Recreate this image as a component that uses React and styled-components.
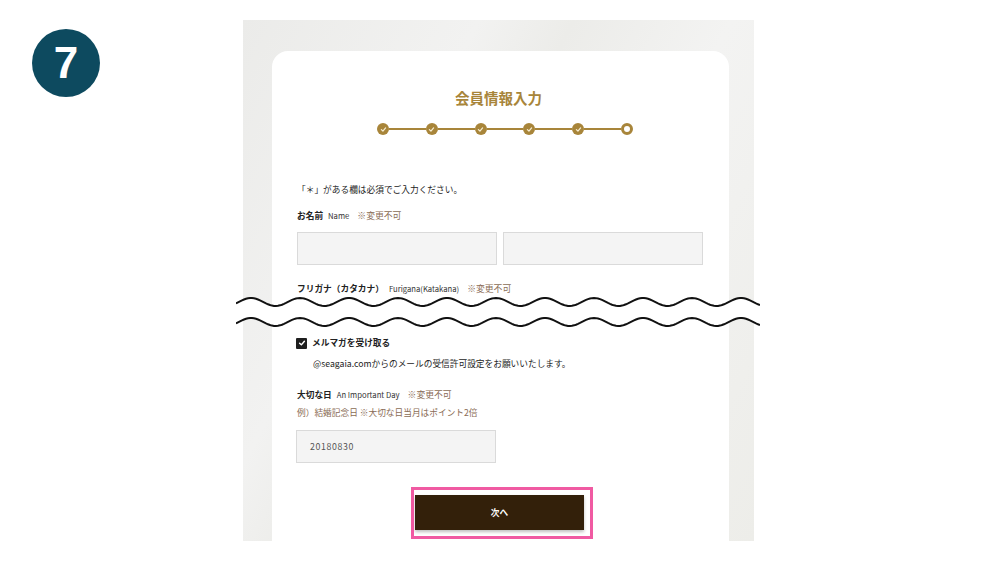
import React from 'react';
import styled, { createGlobalStyle } from 'styled-components';

const GOLD = '#a8853a';

const GlobalStyle = createGlobalStyle`
  body {
    margin: 0;
    background: #fff;
    font-family: "Noto Sans CJK JP", "Noto Sans", sans-serif;
    color: #222;
  }
`

const Page = styled.div`
  display: flex;
  align-items: flex-start;
  width: 999px;
  height: 562px;
  padding-top: 20px;
  box-sizing: border-box;
`
const Badge = styled.div`
  width: 68px;
  height: 68px;
  margin: 9px 0 0 32px;
  border-radius: 50%;
  background: #0d4a5f;
  color: #fff;
  display: flex;
  align-items: center;
  justify-content: center;
  font-family: "Liberation Sans", Arial, sans-serif;
  font-weight: bold;
  font-size: 44px;
`
const Panel = styled.div`
  width: 511px;
  height: 521px;
  margin-left: 143px;
  padding: 31px 25px 0 29px;
  box-sizing: border-box;
  background: linear-gradient(118deg, #ebebe9 0%, #f2f2f1 30%, #ecece9 42%, #f3f3f2 62%, #edede9 100%);
`
const Card = styled.div`
  height: 490px;
  background: #fff;
  border-radius: 16px 16px 0 0;
  padding: 38px 26px 0 25px;
  box-sizing: border-box;
`
const Title = styled.h1`
  margin: 0;
  text-align: center;
  font-size: 14.5px;
  line-height: 18px;
  font-weight: bold;
  color: ${GOLD};
  padding-right: 3px;
`
const Steps = styled.div`
  display: flex;
  align-items: center;
  width: 256px;
  margin: 16px 0 0 80px;
`
const Dot = styled.div`
  width: 12px;
  height: 12px;
  border-radius: 50%;
  box-sizing: border-box;
  flex-shrink: 0;
  display: flex;
  align-items: center;
  justify-content: center;
  background: ${p => (p.$current ? '#fff' : GOLD)};
  border: ${p => (p.$current ? `3px solid ${GOLD}` : 'none')};
`
const StepLine = styled.div`
  flex: 1;
  height: 2px;
  background: ${GOLD};
`
const Note = styled.p`
  margin: 48px 0 0;
  font-size: 8.7px;
  line-height: 14px;
`
const FieldLabel = styled.div`
  margin-top: ${p => p.$top}px;
  display: flex;
  align-items: baseline;
  font-size: 8.7px;
  line-height: 14px;
  font-weight: bold;
`
const Sub = styled.span`
  margin-left: 5px;
  font-size: 7.7px;
  font-weight: normal;
  color: #333;
`
const Fixed = styled.span`
  margin-left: 8px;
  font-size: 8.8px;
  font-weight: normal;
  color: #8a6c55;
`
const InputRow = styled.div`
  display: flex;
  gap: 6px;
  margin-top: 9px;
`
const Field = styled.div`
  width: 200px;
  height: 33px;
  box-sizing: border-box;
  background: #f4f4f4;
  border: 1px solid #dadada;
  display: flex;
  align-items: center;
  padding-left: 13px;
  font-size: 8.8px;
  letter-spacing: 0.6px;
  color: #555;
  margin: ${p => p.$margin || '0'};
`
const Break = styled.div`
  height: 34px;
  width: 524px;
  margin-left: -61px;
  svg { display: block; }
`
const CheckRow = styled.label`
  display: flex;
  align-items: center;
  gap: 5px;
  margin: 6px 0 0 -1px;
  font-size: 8.7px;
  line-height: 14px;
  font-weight: bold;
`
const Box = styled.span`
  width: 11px;
  height: 11px;
  border-radius: 1px;
  background: #1e1e1e;
  display: flex;
  align-items: center;
  justify-content: center;
`
const Hint = styled.p`
  margin: 7px 0 0 16px;
  font-size: 8.7px;
  line-height: 14px;
`
const Example = styled.p`
  margin: 4px 0 0;
  font-size: 8.7px;
  line-height: 14px;
  color: #8a6c55;
`
const ButtonArea = styled.div`
  position: relative;
  display: flex;
  justify-content: center;
  margin-top: 32px;
  padding-right: 1px;
`
const NextButton = styled.button`
  width: 169px;
  height: 35px;
  border: none;
  background: #33200a;
  color: #fff;
  font-family: inherit;
  font-size: 8.7px;
  font-weight: bold;
  box-shadow: 0 2px 3px rgba(0, 0, 0, 0.25);
`
const Highlight = styled.div`
  position: absolute;
  top: -8px;
  left: 114px;
  width: 182px;
  height: 52px;
  box-sizing: border-box;
  border: 3px solid #f05aa2;
  pointer-events: none;
`

const wavePoints = (cy, width) => {
  const pts = [];
  for (let x = 0; x <= width; x += 2) {
    pts.push([x, cy - 4 * Math.cos((2 * Math.PI * (x - 15)) / 49)]);
  }
  return pts;
};
const toPath = pts => pts.map((p, i) => `${i ? 'L' : 'M'}${p[0]} ${p[1].toFixed(2)}`).join(' ');

const WaveBreak = () => {
  const top = wavePoints(6, 524);
  const bottom = wavePoints(26, 524);
  const fill = toPath(top) + ' ' + bottom.slice().reverse().map(p => `L${p[0]} ${p[1].toFixed(2)}`).join(' ') + ' Z';
  return (
    <Break>
      <svg width="524" height="34" viewBox="0 0 524 34">
        <path d={fill} fill="#fff" />
        <path d={toPath(top)} fill="none" stroke="#111" strokeWidth="2" />
        <path d={toPath(bottom)} fill="none" stroke="#111" strokeWidth="2" />
      </svg>
    </Break>
  );
};

const Tick = ({ size = 6, color = '#fff' }) => (
  <svg width={size} height={size} viewBox="0 0 10 10">
    <polyline points="2,5.2 4.2,7.3 8,2.8" fill="none" stroke={color} strokeWidth="1.8" strokeLinecap="round" strokeLinejoin="round" />
  </svg>
);

const StepBar = () => {
  const items = [];
  for (let i = 0; i < 6; i++) {
    if (i) items.push(<StepLine key={'l' + i} />);
    items.push(
      <Dot key={'d' + i} $current={i === 5}>
        {i < 5 && <Tick size={7} color="#f6ecd0" />}
      </Dot>
    );
  }
  return <Steps>{items}</Steps>;
};

const App = () => {
  return (
    <>
      <GlobalStyle />
      <Page>
        <Badge>7</Badge>
        <Panel>
          <Card>
            <Title>会員情報入力</Title>
            <StepBar />
            <Note>「＊」がある欄は必須でご入力ください。</Note>
            <FieldLabel $top={12}>
              お名前<Sub>Name</Sub><Fixed>※変更不可</Fixed>
            </FieldLabel>
            <InputRow>
              <Field />
              <Field />
            </InputRow>
            <FieldLabel $top={17}>
              フリガナ（カタカナ）<Sub>Furigana(Katakana)</Sub><Fixed>※変更不可</Fixed>
            </FieldLabel>
            <WaveBreak />
            <CheckRow>
              <Box><Tick size={8} /></Box>
              メルマガを受け取る
            </CheckRow>
            <Hint>@seagaia.comからのメールの受信許可設定をお願いいたします。</Hint>
            <FieldLabel $top={17}>
              大切な日<Sub>An Important Day</Sub><Fixed>※変更不可</Fixed>
            </FieldLabel>
            <Example>例）結婚記念日 ※大切な日当月はポイント2倍</Example>
            <Field $margin="10px 0 0 -1px">20180830</Field>
            <ButtonArea>
              <NextButton>次へ</NextButton>
              <Highlight />
            </ButtonArea>
          </Card>
        </Panel>
      </Page>
    </>
  );
};

export default App;
